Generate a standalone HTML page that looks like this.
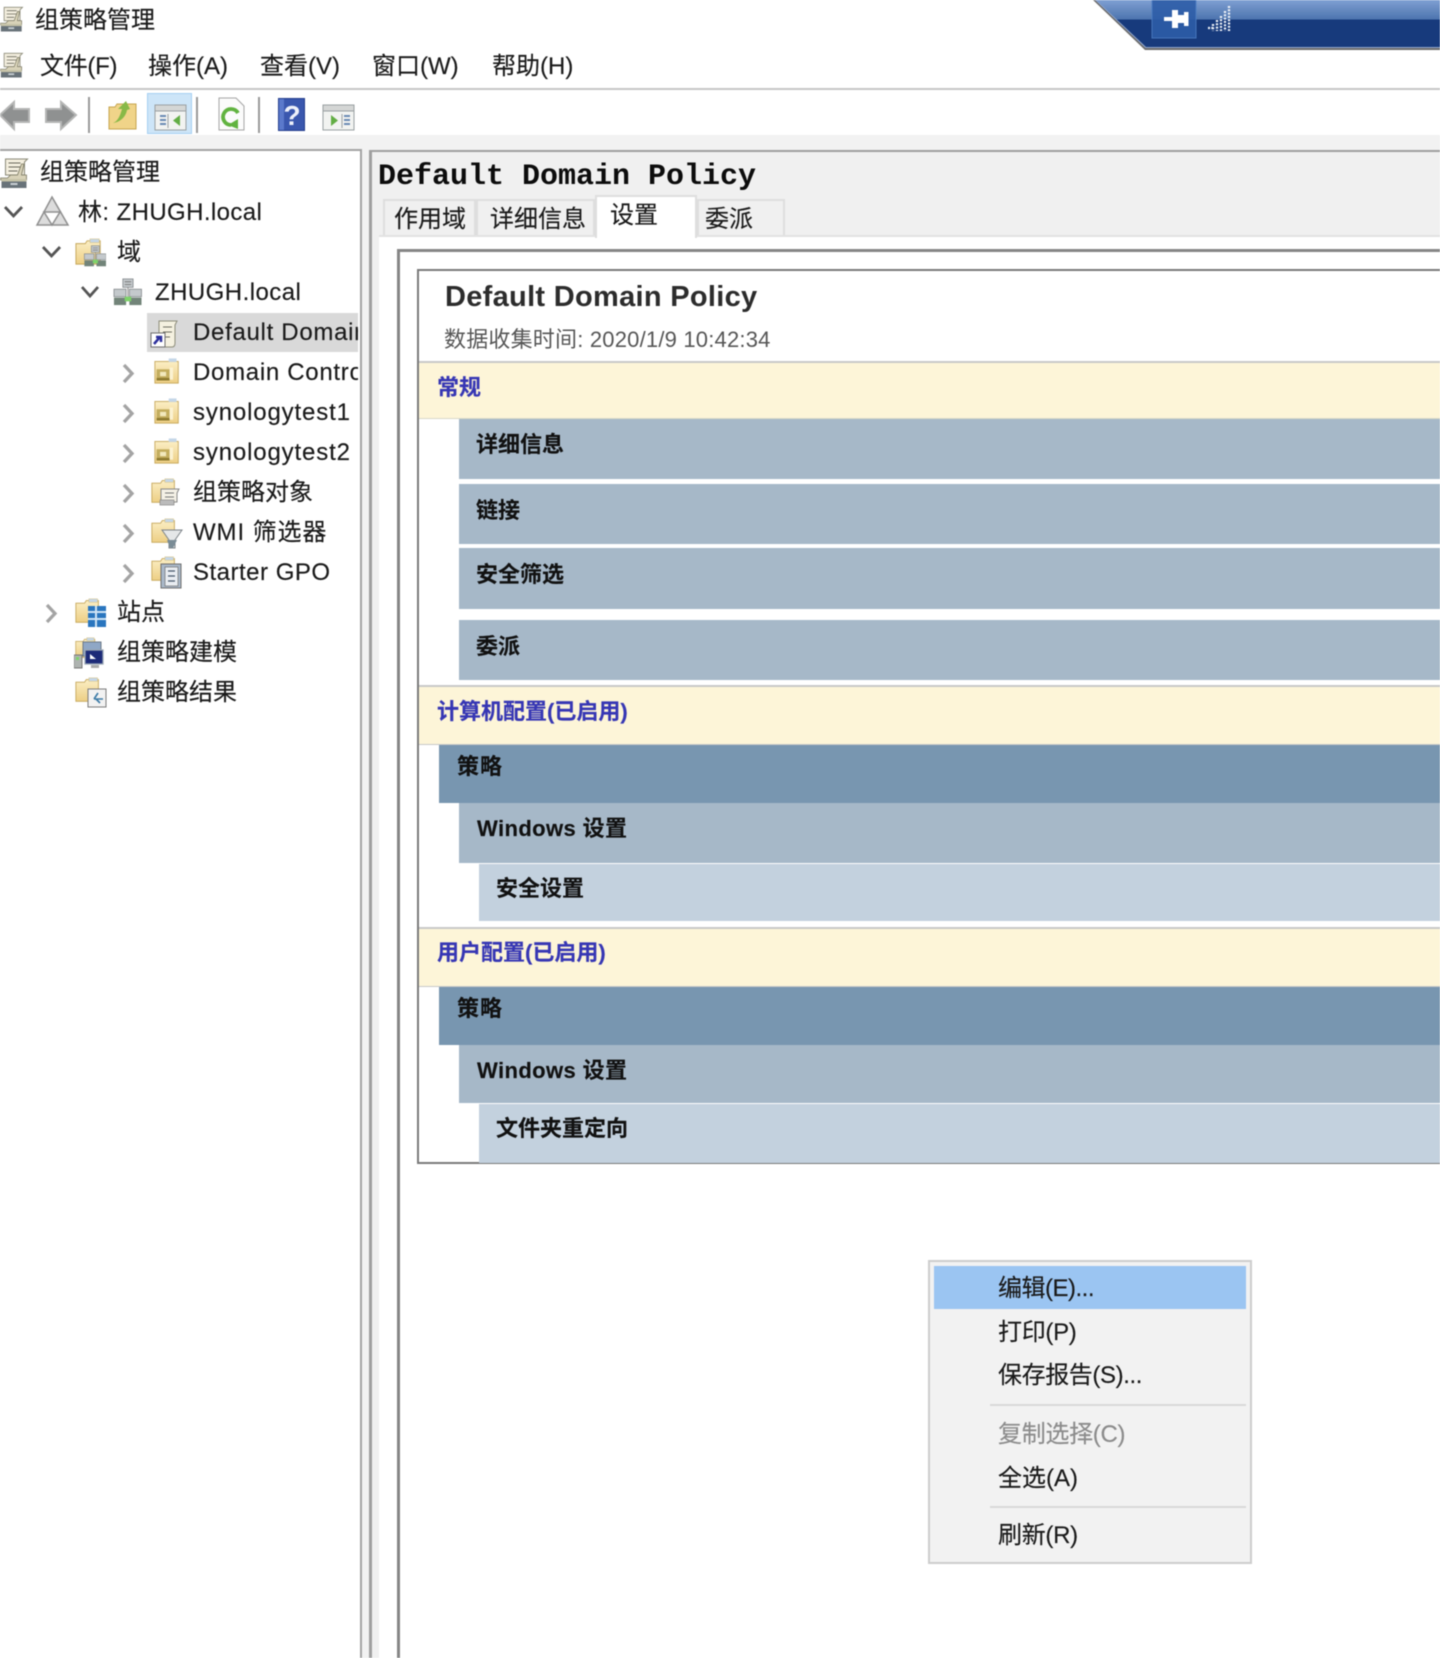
<!DOCTYPE html>
<html lang="zh-CN"><head><meta charset="utf-8"><title>组策略管理</title>
<style>
html,body{margin:0;padding:0;background:#fff}
#r{position:relative;width:1440px;height:1658px;overflow:hidden;background:#fff;font-family:"Liberation Sans","Noto Sans CJK SC",sans-serif;color:#1a1a1a;filter:blur(.45px)}
#r div,#r svg{position:absolute}
.t{white-space:nowrap;line-height:30px;height:30px;font-size:24px;margin-top:1px;-webkit-text-stroke:.15px currentColor}
.l{letter-spacing:.7px}
.b{font-weight:700;font-size:22px;color:#111}
.h{font-weight:700;font-size:22px;color:#3636b4}
.m{font-size:24px}
.p{letter-spacing:-.3px}
</style></head><body><div id="r">
<svg width="0" height="0" style="position:absolute"><defs>
<linearGradient id="fy" x1="0" y1="0" x2="0" y2="1"><stop offset="0" stop-color="#fbeec4"/><stop offset="1" stop-color="#edcf85"/></linearGradient>
<symbol id="gpm" viewBox="0 0 30 30"><path d="M5 1h22l-3 3v13H5z" fill="#f4efdf" stroke="#8b8a78"/><path d="M8 5h12M8 9h12M8 13h9" stroke="#66665a" fill="none"/><path d="M0 20h7l3-3 7 0 4-11 2.500 0-2.500 11h5v5H0z" fill="#d8d2b8" stroke="#77755f" stroke-width=".8"/><rect x="1" y="21" width="25" height="9" fill="#687279"/><rect x="1" y="21" width="25" height="2.500" fill="#c6c3a8"/><rect x="10" y="25" width="7" height="2" fill="#c9d0d4"/></symbol>
<symbol id="fld" viewBox="0 0 30 30"><path d="M1 28V6h10l2-3h14v25z" fill="url(#fy)" stroke="#c5a659" stroke-width="1"/><rect x="16" y="1" width="10" height="4" fill="#c4d6e8" stroke="#d9c381" stroke-width=".6"/></symbol>
<symbol id="ou" viewBox="0 0 30 30"><rect x="1" y="4" width="27" height="25" fill="url(#fy)" stroke="#c5a659"/><rect x="17" y="0.500" width="9" height="4" fill="#c4d6e8"/><rect x="3" y="13" width="15" height="13" fill="#c3ad5e"/><rect x="7" y="16" width="7" height="5" fill="#f2e9bd"/><rect x="3" y="23" width="15" height="3" fill="#8f7b30"/><path d="M20 11v14" stroke="#fbf2d2" stroke-width="4"/></symbol>
<symbol id="srv" viewBox="0 0 30 30"><rect x="10" y="1" width="11" height="9" fill="#c4c9cc" stroke="#7e8386" stroke-width=".8"/><path d="M12 4h7M12 7h7" stroke="#777"/><rect x="0.500" y="12" width="13" height="8" fill="#c4c9cc" stroke="#7e8386" stroke-width=".8"/><rect x="17" y="12" width="13" height="8" fill="#c4c9cc" stroke="#7e8386" stroke-width=".8"/><path d="M15.500 10v12" stroke="#888" fill="none"/><rect x="0.500" y="21" width="13" height="8" fill="#728479"/><rect x="17" y="21" width="13" height="8" fill="#728479"/><rect x="12" y="20" width="7" height="5" fill="#7ed36a"/></symbol>
</defs></svg>

<!-- title -->
<svg style="left:0;top:5px" width="25" height="28"><use href="#gpm" width="25" height="28"/></svg>
<div class="t" style="left:35px;top:5px">组策略管理</div>

<!-- pin bar -->
<svg style="left:1090px;top:0" width="350" height="52">
<defs><linearGradient id="pb" x1="0" y1="0" x2="0" y2="1"><stop offset="0" stop-color="#7f9fd2"/><stop offset=".42" stop-color="#4c74ae"/><stop offset=".42" stop-color="#173a7c"/><stop offset="1" stop-color="#173a7c"/></linearGradient></defs>
<path d="M3 0L55 50H350V0z" fill="#6c6c6c"/><path d="M5 0L55.500 48H350V0z" fill="#93a8ce"/><path d="M6 0L56 47H350V0z" fill="url(#pb)"/>
<rect x="62" y="-1" width="44" height="39" fill="#2d5da8" opacity=".9" stroke="#4a7cc2"/>
<path d="M74 17h9v4h-9zM82 10h6v18h-6zM87 15h8v8h-8zM94 12h4.500v14H94z" fill="#fff"/>
<path d="M118 28l5 0M123 24v7M127 20v11M131 16v15M135 11v20M139 6v25" stroke="#f0f3f8" stroke-width="2.300" stroke-dasharray="2 1.300" fill="none"/>
</svg>

<!-- menu -->
<svg style="left:0;top:51px" width="25" height="28"><use href="#gpm" width="25" height="28"/></svg>
<div class="t m" style="left:40px;top:51px;letter-spacing:-.3px">文件(F)</div>
<div class="t m" style="left:148px;top:51px">操作(A)</div>
<div class="t m" style="left:260px;top:51px">查看(V)</div>
<div class="t m" style="left:372px;top:51px">窗口(W)</div>
<div class="t m" style="left:492px;top:51px">帮助(H)</div>
<div style="left:0;top:88px;width:1440px;height:2px;background:#c6c6c6"></div>

<!-- toolbar -->
<div style="left:0;top:135px;width:1440px;height:1523px;background:#f2f2f2"></div>
<svg style="left:0;top:90px" width="360" height="46">
<path d="M0 25L14 12v7h15v13H14v7z" fill="#8f9191" stroke="#b5b6b5" stroke-width="2"/>
<path d="M76 25L61 12v7H46v13h15v7z" fill="#8f9191" stroke="#b5b6b5" stroke-width="2"/>
<path d="M89 7v36M197 7v36M259 7v36" stroke="#9a9a9a" stroke-width="2"/>
<path d="M109 39V17h6l2-3h19v25z" fill="#f0d489" stroke="#c6a54f"/><path d="M113 33c5-2 7-7 9-14l-4 0 8-8 4 8-3 1c-1 6-6 12-14 13z" fill="#88b947"/>
<rect x="147.500" y="3.500" width="44" height="40" fill="#cde5f8" stroke="#a6d0f2"/>
<rect x="155" y="15" width="31" height="25" fill="#f2f3f1" stroke="#9aa0a2"/><rect x="155" y="15" width="31" height="6" fill="#d4d6d5" stroke="#9aa0a2"/><path d="M160 26h6M160 30h6M160 34h6" stroke="#6a8ab4" stroke-width="2"/><path d="M168 24v14" stroke="#9aa0a2"/><path d="M180 25v11l-7-5.500z" fill="#62ad44"/>
<path d="M219 8h17l8 8v24h-25z" fill="#fbfbfb" stroke="#a5a5a5"/><path d="M238 23A8 8 0 1 0 231 35" fill="none" stroke="#61b340" stroke-width="3.800"/><path d="M228 35l10-6v10z" fill="#61b340"/>
<rect x="278.500" y="8.500" width="26" height="32" fill="#3a57ae" stroke="#223c8c"/><rect x="279" y="9" width="5" height="31" fill="#5b79cb"/>
<text x="292" y="35" font-family="Liberation Sans" font-weight="700" font-size="28" fill="#eef1fa" text-anchor="middle">?</text>
<rect x="323" y="15" width="31" height="25" fill="#f2f3f1" stroke="#9aa0a2"/><rect x="323" y="15" width="31" height="6" fill="#d4d6d5" stroke="#9aa0a2"/><path d="M344 26h6M344 30h6M344 34h6" stroke="#6a8ab4" stroke-width="2"/><path d="M342 24v14" stroke="#9aa0a2"/><path d="M331 25v11l7-5.500z" fill="#62ad44"/>
</svg>

<!-- left panel -->
<div style="left:-2px;top:149px;width:362px;height:1520px;background:#fff;border:2px solid #a3a3a3;margin-left:-2px"></div>
<div style="left:147px;top:313px;width:211px;height:39px;background:#d9d9d9"></div>

<svg style="left:0;top:158px" width="31" height="30"><use href="#gpm" width="31" height="30"/></svg>
<div class="t" style="left:40px;top:157px">组策略管理</div>

<svg style="left:0;top:195px" width="150" height="500">
<g fill="none" stroke="#555" stroke-width="2.800"><path d="M5 12l8.500 9 8.500-9M43 52l8.500 9 8.500-9M82 92l8 9 8-9"/></g>
<g fill="none" stroke="#a4a4a4" stroke-width="3.300"><path d="M124 170l8 8.500-8 8.500M124 210l8 8.500-8 8.500M124 250l8 8.500-8 8.500M124 290l8 8.500-8 8.500M124 330l8 8.500-8 8.500M124 370l8 8.500-8 8.500M47 410l8 8.500-8 8.500"/></g>
<path d="M52 2L68 30H37z" fill="#dcdcdc" stroke="#8f8f8f" stroke-width="1.500"/><path d="M44 17h16L52 30z" fill="#fff" stroke="#8f8f8f" stroke-width="1.500"/>
</svg>
<div class="t l" style="left:78px;top:197px;letter-spacing:.4px">林: ZHUGH.local</div>

<svg style="left:74px;top:238px" width="34" height="30"><use href="#fld" width="30" height="28" y="0"/><use href="#srv" x="10" y="7" width="22" height="22"/></svg>
<div class="t" style="left:117px;top:237px">域</div>

<svg style="left:112px;top:278px" width="32" height="28"><use href="#srv" width="31" height="28"/></svg>
<div class="t l" style="left:155px;top:277px;letter-spacing:.45px">ZHUGH.local</div>

<svg style="left:150px;top:318px" width="32" height="32"><path d="M9 3h18l-2 4v18c0 3-1 4-3 4H9z" fill="#f5f1e0" stroke="#8d8d7b"/><path d="M13 9h9M13 14h9M13 19h7" stroke="#6e6e62"/><rect x="1" y="15" width="14" height="14" fill="#fff" stroke="#6d6d6d"/><path d="M4 26l6-7M6 19h5v5" stroke="#2c2f9c" stroke-width="2.500" fill="none"/></svg>
<div class="t l" style="left:193px;top:317px;width:165px;overflow:hidden">Default Domain Policy</div>

<svg style="left:152px;top:358px" width="30" height="26"><use href="#ou" width="30" height="26"/></svg>
<div class="t l" style="left:193px;top:357px;width:165px;overflow:hidden">Domain Controllers</div>
<svg style="left:152px;top:398px" width="30" height="26"><use href="#ou" width="30" height="26"/></svg>
<div class="t l" style="left:193px;top:397px;letter-spacing:.85px">synologytest1</div>
<svg style="left:152px;top:438px" width="30" height="26"><use href="#ou" width="30" height="26"/></svg>
<div class="t l" style="left:193px;top:437px;letter-spacing:.85px">synologytest2</div>

<svg style="left:150px;top:478px" width="34" height="30"><use href="#fld" width="28" height="26"/><path d="M11 11h18l-2 4v9H11z" fill="#f4f1e6" stroke="#888"/><path d="M15 15h9M15 19h9" stroke="#777"/><rect x="10" y="22" width="14" height="5" fill="#bbb" stroke="#888" stroke-width=".7"/></svg>
<div class="t" style="left:193px;top:477px">组策略对象</div>

<svg style="left:150px;top:518px" width="34" height="32"><use href="#fld" width="28" height="26"/><path d="M12 12h20l-7 10v8h-6v-8z" fill="#e5e7e8" stroke="#7c8388"/><path d="M17 22h10l-4 8h-3z" fill="#7a8c96"/></svg>
<div class="t" style="left:193px;top:517px;letter-spacing:.9px">WMI 筛选器</div>

<svg style="left:150px;top:556px" width="34" height="34"><use href="#fld" width="28" height="26"/><rect x="11" y="8" width="20" height="24" fill="#a9b8c9" stroke="#6f6f6f"/><rect x="15" y="11" width="13" height="19" fill="#e9edf2" stroke="#6f6f6f" stroke-width=".7"/><path d="M18 15h7M18 20h7M18 25h7" stroke="#44566a" stroke-width="1.300"/></svg>
<div class="t l" style="left:193px;top:557px;letter-spacing:.5px">Starter GPO</div>

<svg style="left:74px;top:598px" width="34" height="30"><use href="#fld" width="28" height="26"/><rect x="14" y="8" width="18" height="21" fill="#2a76bf"/><path d="M14 14h18M14 21h18M22 8v21" stroke="#cfe4f5" stroke-width="2"/></svg>
<div class="t" style="left:117px;top:597px">站点</div>

<svg style="left:74px;top:637px" width="34" height="32"><use href="#fld" width="24" height="22"/><rect x="9" y="5" width="18" height="14" fill="#8fa7c6" stroke="#6d7a88"/><rect x="11" y="13" width="18" height="14" fill="#1d2a78" stroke="#9aa7b5" stroke-width="1.300"/><path d="M16 17l6 5h-6z" fill="#fff"/><rect x="0" y="18" width="8" height="13" fill="#aeb3b0" stroke="#777"/><rect x="2" y="20" width="3" height="3" fill="#7fd26c"/><path d="M17 28h8v3h-8" fill="#aaa"/></svg>
<div class="t" style="left:117px;top:637px">组策略建模</div>

<svg style="left:74px;top:677px" width="34" height="32"><use href="#fld" width="28" height="26"/><rect x="14" y="12" width="18" height="18" fill="#f2f2f2" stroke="#7c7c7c"/><path d="M20 22l4-6M20 22h9M22 22l4 4" stroke="#3b7aa6" stroke-width="1.600" fill="none"/></svg>
<div class="t" style="left:117px;top:677px">组策略结果</div>

<!-- right panel -->
<div style="left:369px;top:150px;width:1100px;height:1520px;background:#f0f0f0;border:solid #9f9f9f;border-width:2px 0 0 3px"></div>
<div style="left:378px;top:160px;font:700 30px/34px 'Liberation Mono',monospace;color:#0c0c0c;white-space:nowrap">Default Domain Policy</div>

<div style="left:383px;top:199px;width:93px;height:36px;background:#f0f0f0;border:2px solid #dedede;border-bottom:0;box-sizing:border-box"></div>
<div style="left:476px;top:199px;width:119px;height:36px;background:#f0f0f0;border:2px solid #dedede;border-bottom:0;box-sizing:border-box"></div>
<div style="left:697px;top:199px;width:88px;height:36px;background:#f0f0f0;border:2px solid #dedede;border-bottom:0;box-sizing:border-box"></div>
<div style="left:379px;top:235px;width:1061px;height:1423px;background:#fff;border-top:2px solid #e2e2e2;box-sizing:border-box"></div>
<div style="left:595px;top:195px;width:102px;height:43px;background:#fff;border:solid #dedede;border-width:2px 2px 0 2px;box-sizing:border-box"></div>
<div class="t" style="left:394px;top:204px">作用域</div>
<div class="t" style="left:490px;top:204px">详细信息</div>
<div class="t" style="left:610px;top:200px">设置</div>
<div class="t" style="left:705px;top:204px">委派</div>

<div style="left:397px;top:249px;width:1060px;height:1420px;background:#fff;border:solid #868686;border-width:3px 0 0 3px"></div>

<!-- report box -->
<div style="left:417px;top:269px;width:1040px;height:895px;background:#fff;border:solid #7a7a7a;border-width:2px 0 2px 2px;box-sizing:border-box"></div>
<div style="left:445px;top:280px;font:700 29px/34px 'Liberation Sans',sans-serif;color:#2c2c2c;white-space:nowrap;letter-spacing:.3px">Default Domain Policy</div>
<div style="left:444px;top:325px;font-size:22px;line-height:30px;color:#565656;white-space:nowrap;letter-spacing:.2px">数据收集时间: 2020/1/9 10:42:34</div>

<div style="left:419px;top:361px;width:1030px;height:58px;background:#fdf5d8;border-top:2px solid #c8c8c8;border-bottom:1px solid #d8d8c8;box-sizing:border-box"></div>
<div class="t h" style="left:437px;top:372px">常规</div>
<div style="left:459px;top:419px;width:990px;height:60px;background:#a6b8c8"></div>
<div class="t b" style="left:476px;top:429px">详细信息</div>
<div style="left:459px;top:484px;width:990px;height:60px;background:#a6b8c8"></div>
<div class="t b" style="left:476px;top:495px">链接</div>
<div style="left:459px;top:548px;width:990px;height:61px;background:#a6b8c8"></div>
<div class="t b" style="left:476px;top:559px">安全筛选</div>
<div style="left:459px;top:620px;width:990px;height:60px;background:#a6b8c8"></div>
<div class="t b" style="left:476px;top:631px">委派</div>

<div style="left:419px;top:685px;width:1030px;height:60px;background:#fdf5d8;border-top:2px solid #c8c8c8;border-bottom:1px solid #c8c8c8;box-sizing:border-box"></div>
<div class="t h" style="left:437px;top:696px">计算机配置(已启用)</div>
<div style="left:439px;top:745px;width:1010px;height:58px;background:#7896b0"></div>
<div class="t b" style="left:457px;top:751px;letter-spacing:1px">策略</div>
<div style="left:459px;top:803px;width:990px;height:60px;background:#a6b8c8"></div>
<div class="t b" style="left:477px;top:813px;letter-spacing:.4px">Windows 设置</div>
<div style="left:479px;top:864px;width:970px;height:57px;background:#c3d1de"></div>
<div class="t b" style="left:496px;top:873px">安全设置</div>

<div style="left:419px;top:927px;width:1030px;height:60px;background:#fdf5d8;border-top:2px solid #c8c8c8;border-bottom:1px solid #c8c8c8;box-sizing:border-box"></div>
<div class="t h" style="left:437px;top:937px">用户配置(已启用)</div>
<div style="left:439px;top:987px;width:1010px;height:58px;background:#7896b0"></div>
<div class="t b" style="left:457px;top:993px;letter-spacing:1px">策略</div>
<div style="left:459px;top:1045px;width:990px;height:58px;background:#a6b8c8"></div>
<div class="t b" style="left:477px;top:1055px;letter-spacing:.4px">Windows 设置</div>
<div style="left:479px;top:1104px;width:970px;height:59px;background:#c3d1de"></div>
<div class="t b" style="left:496px;top:1113px">文件夹重定向</div>

<!-- context menu -->
<div style="left:928px;top:1260px;width:324px;height:304px;background:#f2f2f2;border:2px solid #cdcdcd;box-sizing:border-box"></div>
<div style="left:934px;top:1266px;width:312px;height:43px;background:#9bc5f2"></div>
<div style="left:990px;top:1404px;width:256px;height:2px;background:#d9d9d9"></div>
<div style="left:990px;top:1506px;width:256px;height:2px;background:#d9d9d9"></div>
<div class="t m p" style="left:998px;top:1273px;letter-spacing:-.5px">编辑(E)...</div>
<div class="t m p" style="left:998px;top:1317px">打印(P)</div>
<div class="t m p" style="left:998px;top:1360px;letter-spacing:-.4px">保存报告(S)...</div>
<div class="t m p" style="left:998px;top:1419px;color:#8c8c8c">复制选择(C)</div>
<div class="t m" style="left:998px;top:1463px">全选(A)</div>
<div class="t m p" style="left:998px;top:1520px">刷新(R)</div>
</div></body></html>
